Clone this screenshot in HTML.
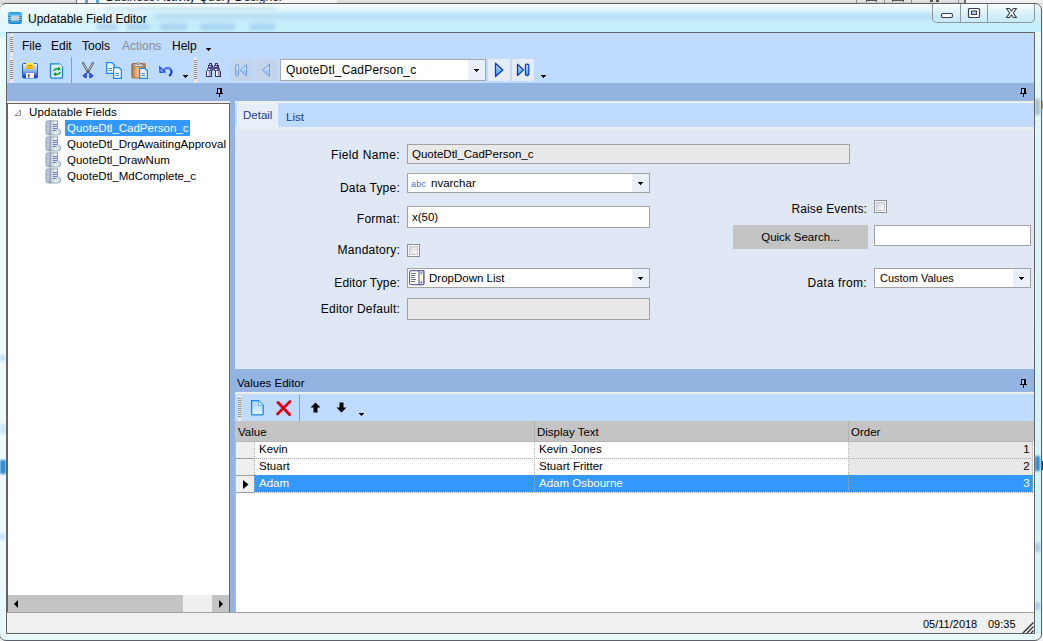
<!DOCTYPE html>
<html><head><meta charset="utf-8">
<style>
*{margin:0;padding:0;box-sizing:border-box}
html,body{width:1043px;height:641px;overflow:hidden;background:#eef0f2}
body{position:relative;font-family:"Liberation Sans",sans-serif;font-size:12px;color:#000}
.a{position:absolute}
.t{position:absolute;white-space:nowrap;line-height:14px;font-size:12px}
.box{position:absolute;border:1px solid #a3a3a3;background:#fff}
.dis{background:#e9e9e9}
.cbtn{position:absolute;top:0;right:0;bottom:0;width:17px;background:#e9f0fa}
.arr{position:absolute;width:5px;height:3px;background:linear-gradient(#000,#000) 0 0/5px 1px no-repeat,linear-gradient(#000,#000) 1px 1px/3px 1px no-repeat,linear-gradient(#000,#000) 2px 2px/1px 1px no-repeat}
.chk{position:absolute;width:13px;height:13px;border:1px solid #8e8e8e;background:#fff}
.chk:after{content:"";position:absolute;left:1px;top:1px;right:1px;bottom:1px;background:linear-gradient(135deg,#c8ccd4,#eeeeee 60%,#f8f8f8);box-shadow:inset 0 0 0 1px #c4c8d0}
.grip{position:absolute;width:3px;background:#eeeae4}
.grip:after{content:"";position:absolute;left:0;right:0;top:3px;bottom:3px;background:repeating-linear-gradient(to bottom,#8c8c8c 0,#8c8c8c 1px,transparent 1px,transparent 2px)}
.pin{width:8px;height:10px}
.sep{position:absolute;width:1px;background:#9c9c9c}
</style></head><body>

<!-- background window strip -->
<div class="a" style="left:0;top:0;width:1043px;height:4px;background:linear-gradient(to bottom,#e8e8e8 0,#e0e0e0 1px,#d6d6d6 2px,#d4d4d4 3px)"></div>
<div class="a" style="left:77px;top:0;width:260px;height:3px;background:#f4f4f4"></div>
<div class="a" style="left:76px;top:0;width:1px;height:3px;background:#6d6d6d"></div>
<div class="a" style="left:85px;top:0;width:3px;height:3px;background:#58a8e0"></div>
<div class="a" style="left:96px;top:0;width:3px;height:3px;background:#58a8e0"></div>
<div class="t" style="left:106px;top:-10px;font-size:12px;color:#101828">Business Activity Query Designer</div>
<div class="a" style="left:856px;top:0;width:1px;height:3px;background:#8a8a8a"></div>
<div class="a" style="left:884px;top:0;width:1px;height:3px;background:#8a8a8a"></div>
<div class="a" style="left:911px;top:0;width:1px;height:3px;background:#8a8a8a"></div>
<div class="a" style="left:958px;top:0;width:1px;height:3px;background:#8a8a8a"></div>
<div class="a" style="left:964px;top:0;width:2px;height:3px;background:#6d6d6d"></div>
<div class="a" style="left:966px;top:0;width:77px;height:3px;background:#f0f0f0"></div>
<div class="a" style="left:866px;top:0;width:11px;height:1px;background:#555"></div>
<div class="a" style="left:866px;top:0;width:1px;height:2px;background:#555"></div>
<div class="a" style="left:876px;top:0;width:1px;height:2px;background:#555"></div>
<div class="a" style="left:892px;top:0;width:12px;height:1px;background:#555"></div>
<div class="a" style="left:892px;top:0;width:1px;height:2px;background:#555"></div>
<div class="a" style="left:903px;top:0;width:1px;height:2px;background:#555"></div>
<div class="a" style="left:930px;top:0;width:3px;height:2px;background:#555"></div>
<div class="a" style="left:936px;top:0;width:3px;height:2px;background:#555"></div>

<!-- window frame -->
<div class="a" style="left:-1px;top:3px;width:1043px;height:638px;border:1px solid #5c6268;border-radius:7px;box-shadow:inset 0 1px 0 #fff;background:linear-gradient(to bottom,#f8feff 0,#e2f6fc 5px,#cdeefa 12px,#c6eefa 20px,#c4f2fc 26px,#c8f4fa 30px,#eefbfc 36px,#eaf9fb 100%)"></div>


<!-- glass blur -->
<div class="a" style="left:0;top:5px;width:160px;height:27px;background:linear-gradient(to right,rgba(255,255,255,.5),rgba(255,255,255,.25) 70%,rgba(255,255,255,0))"></div>
<div class="a" style="left:105px;top:7px;width:172px;height:3px;background:rgba(130,170,220,.22);filter:blur(1.5px)"></div>
<div class="a" style="left:155px;top:14px;width:785px;height:5px;background:rgba(110,165,225,.26);filter:blur(2px)"></div>
<div class="a" style="left:97px;top:24px;width:20px;height:6px;background:rgba(100,140,215,.32);filter:blur(2px)"></div>
<div class="a" style="left:127px;top:24px;width:23px;height:6px;background:rgba(100,140,215,.32);filter:blur(2px)"></div>
<div class="a" style="left:160px;top:24px;width:27px;height:6px;background:rgba(100,140,215,.32);filter:blur(2px)"></div>
<div class="a" style="left:200px;top:24px;width:35px;height:6px;background:rgba(100,140,215,.32);filter:blur(2px)"></div>
<div class="a" style="left:250px;top:24px;width:25px;height:6px;background:rgba(100,140,215,.32);filter:blur(2px)"></div>


<!-- frame blobs -->
<div class="a" style="left:1035px;top:32px;width:6px;height:602px;background:linear-gradient(to bottom,#e6f8fb,#d4f5f9 30%,#d0f4f8)"></div>
<div class="a" style="left:1035px;top:543px;width:5px;height:9px;background:rgba(120,170,230,.5);filter:blur(1.2px)"></div>
<div class="a" style="left:1035px;top:602px;width:5px;height:8px;background:rgba(120,170,230,.5);filter:blur(1.2px)"></div>
<div class="a" style="left:0;top:355px;width:5px;height:6px;background:rgba(120,180,235,.35);filter:blur(1.2px)"></div>
<div class="a" style="left:0;top:534px;width:5px;height:6px;background:rgba(120,180,235,.35);filter:blur(1.2px)"></div>

<div class="a" style="left:0;top:424px;width:6px;height:10px;background:rgba(150,210,245,.45);filter:blur(1.5px)"></div>
<div class="a" style="left:0;top:460px;width:6px;height:14px;background:#2a8ed8;filter:blur(1.2px)"></div>
<div class="a" style="left:1035px;top:99px;width:5px;height:16px;background:rgba(140,165,190,.7);filter:blur(1.5px)"></div>
<div class="a" style="left:1035px;top:456px;width:5px;height:15px;background:#2e8cd2;filter:blur(1.2px)"></div>
<div class="a" style="left:1042px;top:101px;width:1px;height:8px;background:#c89850"></div>
<div class="a" style="left:1042px;top:461px;width:1px;height:9px;background:#1a3a6a"></div>

<!-- title -->
<svg class="a" style="left:7px;top:12px" width="16" height="12" viewBox="0 0 16 12">
<defs><linearGradient id="wi" x1="0" y1="0" x2="0" y2="1"><stop offset="0" stop-color="#1e9be0"/><stop offset=".5" stop-color="#7fd4fa"/><stop offset="1" stop-color="#1482cc"/></linearGradient></defs>
<rect x="1" y="0" width="14" height="12" rx="2.5" fill="url(#wi)"/>
<rect x="4" y="3.5" width="8" height="5" fill="#c9d3dc"/>
<path d="M1 4.5h3M1 6.5h3M1 8.5h3M12 4.5h3M12 6.5h3M12 8.5h3" stroke="#3d6f8e" stroke-width=".8"/>
</svg>
<div class="t" style="left:28px;top:12px;font-size:12px;color:#000">Updatable Field Editor</div>

<!-- caption buttons -->
<div class="a" style="left:932px;top:4px;width:103px;height:19px;border:1px solid #8a96a0;border-top:none;border-radius:0 0 5px 5px;background:linear-gradient(to bottom,rgba(255,255,255,.4),rgba(200,230,245,.4))"></div>
<div class="a" style="left:960px;top:4px;width:1px;height:18px;background:#8a96a0"></div>
<div class="a" style="left:987px;top:4px;width:1px;height:18px;background:#8a96a0"></div>

<!-- client area -->
<div class="a" style="left:6px;top:32px;width:1029px;height:602px;border:1px solid #646464;background:#fff"></div>

<!-- menu bar -->
<div class="a" style="left:7px;top:33px;width:1027px;height:50px;background:#bfdbff"></div>
<div class="grip" style="left:10px;top:34px;height:22px"></div>
<div class="t" style="left:22px;top:39px">File</div>
<div class="t" style="left:51px;top:39px">Edit</div>
<div class="t" style="left:82px;top:39px">Tools</div>
<div class="t" style="left:122px;top:39px;color:#8d8d8d">Actions</div>
<div class="t" style="left:172px;top:39px">Help</div>
<div class="arr" style="left:206px;top:48px"></div>

<!-- toolbar -->
<div class="grip" style="left:10px;top:57px;height:26px"></div>

<!-- dock header -->
<div class="a" style="left:7px;top:83px;width:1027px;height:18px;background:#93b3e1"></div>
<div class="a" style="left:7px;top:101px;width:1027px;height:2px;background:#eeeeee"></div>

<!-- left tree -->
<div class="a" style="left:7px;top:103px;width:223px;height:510px;border:1px solid #646464;background:#fff"></div>
<div class="a" style="left:230px;top:101px;width:5px;height:512px;background:#93b3e1"></div>

<!-- right panel -->
<div class="a" style="left:235px;top:103px;width:799px;height:24px;background:#bfdbff"></div>
<div class="a" style="left:235px;top:127px;width:799px;height:2px;background:#eeeeee"></div>
<div class="a" style="left:235px;top:129px;width:799px;height:240px;background:#dfe8f4"></div>

<!-- values editor -->
<div class="a" style="left:235px;top:369px;width:799px;height:23px;background:#93b3e1"></div>
<div class="a" style="left:235px;top:392px;width:799px;height:2px;background:#eeeeee"></div>
<div class="a" style="left:235px;top:394px;width:799px;height:27px;background:#bfdbff"></div>
<div class="a" style="left:235px;top:421px;width:799px;height:20px;background:#c4c4c4"></div>

<!-- status bar -->
<div class="a" style="left:7px;top:613px;width:1027px;height:20px;background:#f0f0f0"></div>
<div class="a" style="left:7px;top:612px;width:1027px;height:1px;background:#a0a0a0"></div>


<!-- toolbar separators -->
<div class="sep" style="left:71px;top:57px;height:26px"></div>
<div class="grip" style="left:194px;top:57px;height:26px"></div>

<!-- nav buttons -->
<div class="a" style="left:231px;top:59px;width:22px;height:22px;background:#c4d4ea"></div>
<div class="a" style="left:255px;top:59px;width:22px;height:22px;background:#c4d4ea"></div>
<div class="box" style="left:280px;top:59px;width:206px;height:22px;border-color:#a8a8a8"><div class="cbtn"></div></div>
<div class="t" style="left:286px;top:63px;font-size:12px;letter-spacing:.18px">QuoteDtl_CadPerson_c</div>
<div class="arr" style="left:474px;top:69px"></div>
<div class="a" style="left:488px;top:59px;width:22px;height:22px;background:#e6ecf4"></div>
<div class="a" style="left:512px;top:59px;width:22px;height:22px;background:#e6ecf4"></div>
<div class="arr" style="left:541px;top:75px"></div>

<!-- pins -->
<svg class="a" style="left:216px;top:88px" width="7" height="9"><path d="M1 0h5v6h-5z" fill="#000"/><path d="M2 1h2v4h-2z" fill="#a8c8f4"/><path d="M0 5h7v1h-7z" fill="#000"/><path d="M3 6h1v3h-1z" fill="#000"/></svg>
<svg class="a" style="left:1020px;top:88px" width="7" height="9"><path d="M1 0h5v6h-5z" fill="#000"/><path d="M2 1h2v4h-2z" fill="#a8c8f4"/><path d="M0 5h7v1h-7z" fill="#000"/><path d="M3 6h1v3h-1z" fill="#000"/></svg>

<!-- tree content -->
<div class="t" style="left:29px;top:105px;font-size:11.5px;letter-spacing:.1px">Updatable Fields</div>
<div class="a" style="left:65px;top:120px;width:125px;height:16px;background:#3399ff"></div>
<div class="t" style="left:67px;top:121px;font-size:11.5px;color:#fff">QuoteDtl_CadPerson_c</div>
<div class="t" style="left:67px;top:137px;font-size:11.5px">QuoteDtl_DrgAwaitingApproval</div>
<div class="t" style="left:67px;top:153px;font-size:11.5px">QuoteDtl_DrawNum</div>
<div class="t" style="left:67px;top:169px;font-size:11.5px">QuoteDtl_MdComplete_c</div>

<!-- tree scrollbar -->
<div class="a" style="left:8px;top:595px;width:221px;height:17px;background:#c4c4c4"></div>
<div class="a" style="left:183px;top:595px;width:29px;height:17px;background:#efefef"></div>
<div class="a" style="left:14px;top:600px;width:0;height:0;border-top:4px solid transparent;border-bottom:4px solid transparent;border-right:4px solid #000"></div>
<div class="a" style="left:219px;top:600px;width:0;height:0;border-top:4px solid transparent;border-bottom:4px solid transparent;border-left:4px solid #000"></div>

<!-- tabs -->
<div class="a" style="left:237px;top:103px;width:41px;height:24px;background:#e6eef9;border:1px solid #f2f6fc;border-bottom:none;border-radius:3px 3px 0 0"></div>
<div class="t" style="left:243px;top:108px;font-size:11.5px;color:#1e3c8c">Detail</div>
<div class="t" style="left:286px;top:110px;font-size:11.5px;color:#1e3c8c">List</div>

<!-- form labels -->
<div class="t" style="left:200px;width:200px;text-align:right;letter-spacing:0.4px;top:148px">Field Name:</div>
<div class="t" style="left:200px;width:200px;text-align:right;letter-spacing:0.23px;top:181px">Data Type:</div>
<div class="t" style="left:200px;width:200px;text-align:right;letter-spacing:0.26px;top:212px">Format:</div>
<div class="t" style="left:200px;width:200px;text-align:right;letter-spacing:0.24px;top:243px">Mandatory:</div>
<div class="t" style="left:200px;width:200px;text-align:right;letter-spacing:0.16px;top:276px">Editor Type:</div>
<div class="t" style="left:200px;width:200px;text-align:right;letter-spacing:0.21px;top:302px">Editor Default:</div>

<!-- form inputs -->
<div class="box dis" style="left:407px;top:144px;width:443px;height:20px"></div>
<div class="t" style="left:412px;top:147px;font-size:11.5px">QuoteDtl_CadPerson_c</div>
<div class="box" style="left:407px;top:173px;width:243px;height:20px"><div class="cbtn"></div></div>
<div class="t" style="left:411px;top:177px;font-size:9px;color:#3a76c4;letter-spacing:.3px">abc</div>
<div class="t" style="left:431px;top:176px;font-size:11.5px">nvarchar</div>
<div class="arr" style="left:638px;top:182px"></div>
<div class="box" style="left:407px;top:206px;width:243px;height:22px"></div>
<div class="t" style="left:412px;top:210px;font-size:11.5px">x(50)</div>
<div class="chk" style="left:407px;top:244px"></div>
<div class="box" style="left:407px;top:268px;width:243px;height:20px"><div class="cbtn"></div></div>
<div class="t" style="left:429px;top:271px;font-size:11.5px">DropDown List</div>
<div class="arr" style="left:638px;top:277px"></div>
<div class="box dis" style="left:407px;top:298px;width:243px;height:22px"></div>

<div class="t" style="left:700px;width:167px;text-align:right;letter-spacing:0.11px;top:202px">Raise Events:</div>
<div class="chk" style="left:874px;top:200px"></div>
<div class="a" style="left:733px;top:225px;width:135px;height:24px;background:#c4c4c4"></div>
<div class="t" style="left:733px;width:135px;text-align:center;top:230px;font-size:11.5px">Quick Search...</div>
<div class="box" style="left:874px;top:225px;width:157px;height:21px"></div>
<div class="t" style="left:700px;width:167px;text-align:right;letter-spacing:0.34px;top:276px">Data from:</div>
<div class="box" style="left:874px;top:268px;width:157px;height:20px"><div class="cbtn"></div></div>
<div class="t" style="left:880px;top:271px;font-size:11px">Custom Values</div>
<div class="arr" style="left:1019px;top:277px"></div>

<!-- values editor -->
<div class="t" style="left:237px;top:376px;font-size:11.5px">Values Editor</div>
<div class="grip" style="left:238px;top:395px;height:26px"></div>
<div class="sep" style="left:299px;top:395px;height:26px"></div>
<div class="arr" style="left:359px;top:413px"></div>

<svg class="a" style="left:1020px;top:379px" width="7" height="9"><path d="M1 0h5v6h-5z" fill="#000"/><path d="M2 1h2v4h-2z" fill="#a8c8f4"/><path d="M0 5h7v1h-7z" fill="#000"/><path d="M3 6h1v3h-1z" fill="#000"/></svg>
<!-- grid -->
<div class="t" style="left:238px;top:425px;font-size:11.5px">Value</div>
<div class="t" style="left:537px;top:425px;font-size:11.5px">Display Text</div>
<div class="t" style="left:851px;top:425px;font-size:11.5px">Order</div>
<div class="a" style="left:534px;top:421px;width:1px;height:20px;background:#b2b2b2"></div>
<div class="a" style="left:848px;top:421px;width:1px;height:20px;background:#b2b2b2"></div>
<div class="a" style="left:235px;top:441px;width:798px;height:1px;background:#b6b6b6"></div>

<div class="a" style="left:235px;top:442px;width:19px;height:50px;background:#efefef"></div>
<div class="a" style="left:849px;top:442px;width:184px;height:33px;background:#e8e8e8"></div>
<div class="a" style="left:254px;top:475px;width:779px;height:17px;background:#3399ff"></div>
<div class="a" style="left:236px;top:458px;width:18px;height:1px;background:#a0a0a0"></div>
<div class="a" style="left:236px;top:475px;width:18px;height:1px;background:#a0a0a0"></div>
<div class="a" style="left:236px;top:492px;width:18px;height:1px;background:#a0a0a0"></div>
<div class="a" style="left:254px;top:458px;width:779px;height:1px;background:repeating-linear-gradient(to right,#a8a8a8 0,#a8a8a8 1px,transparent 1px,transparent 2px)"></div>
<div class="a" style="left:254px;top:492px;width:779px;height:1px;background:repeating-linear-gradient(to right,#a8a8a8 0,#a8a8a8 1px,transparent 1px,transparent 2px)"></div>
<div class="a" style="left:254px;top:442px;width:1px;height:50px;background:repeating-linear-gradient(to bottom,#a8a8a8 0,#a8a8a8 1px,transparent 1px,transparent 2px)"></div>
<div class="a" style="left:534px;top:442px;width:1px;height:50px;background:repeating-linear-gradient(to bottom,#a8a8a8 0,#a8a8a8 1px,transparent 1px,transparent 2px)"></div>
<div class="a" style="left:848px;top:442px;width:1px;height:50px;background:repeating-linear-gradient(to bottom,#a8a8a8 0,#a8a8a8 1px,transparent 1px,transparent 2px)"></div>
<div class="a" style="left:1032px;top:442px;width:1px;height:50px;background:repeating-linear-gradient(to bottom,#a8a8a8 0,#a8a8a8 1px,transparent 1px,transparent 2px)"></div>
<svg class="a" style="left:243px;top:480px" width="6" height="9"><path d="M0 0 L5.5 4.5 L0 9 Z" fill="#000"/></svg>
<div class="a" style="left:235px;top:442px;width:1px;height:170px;background:#bcbcbc"></div>

<div class="t" style="left:259px;top:442px;font-size:11.5px">Kevin</div>
<div class="t" style="left:539px;top:442px;font-size:11.5px">Kevin Jones</div>
<div class="t" style="left:1001px;width:29px;text-align:right;letter-spacing:.3px;top:442px;font-size:11.5px">1</div>
<div class="t" style="left:259px;top:459px;font-size:11.5px">Stuart</div>
<div class="t" style="left:539px;top:459px;font-size:11.5px">Stuart Fritter</div>
<div class="t" style="left:1001px;width:29px;text-align:right;letter-spacing:.3px;top:459px;font-size:11.5px">2</div>
<div class="t" style="left:259px;top:476px;font-size:11.5px;color:#fff">Adam</div>
<div class="t" style="left:539px;top:476px;font-size:11.5px;color:#fff">Adam Osbourne</div>
<div class="t" style="left:1001px;width:29px;text-align:right;letter-spacing:.3px;top:476px;font-size:11.5px;color:#fff">3</div>


<!-- caption glyphs -->
<svg class="a" style="left:940px;top:12px" width="14" height="7"><rect x="1.5" y="1.5" width="11" height="4" rx="1.5" fill="#fff" stroke="#3b3f52" stroke-width="1.2"/></svg>
<svg class="a" style="left:967px;top:7px" width="14" height="12"><rect x="1.5" y="1.5" width="11" height="9" rx="1" fill="#fff" stroke="#3b3f52" stroke-width="1.2"/><rect x="4.5" y="4" width="5" height="3.5" fill="#a8cce8" stroke="#3b3f52" stroke-width="1"/></svg>
<svg class="a" style="left:1004px;top:7px" width="15" height="12"><path d="M2.5 1.5 L5.5 1.5 L7.5 4 L9.5 1.5 L12.5 1.5 L9.3 6 L12.5 10.5 L9.5 10.5 L7.5 8 L5.5 10.5 L2.5 10.5 L5.7 6 Z" fill="#fff" stroke="#3b3f52" stroke-width="1.2" stroke-linejoin="round"/></svg>

<!-- save -->
<svg class="a" style="left:22px;top:63px" width="16" height="16" viewBox="0 0 16 16">
<defs><linearGradient id="sv" x1="0" y1="0" x2="0" y2="1"><stop offset="0" stop-color="#e8f2ff"/><stop offset=".45" stop-color="#9cc0f0"/><stop offset="1" stop-color="#1028a8"/></linearGradient>
<linearGradient id="sy" x1="0" y1="0" x2="0" y2="1"><stop offset="0" stop-color="#ffe860"/><stop offset="1" stop-color="#f0b000"/></linearGradient></defs>
<rect x=".5" y=".5" width="15" height="14.5" rx="1" fill="url(#sv)" stroke="#1a66e0"/>
<rect x="4" y="0" width="8" height="6" fill="url(#sy)"/>
<path d="M6 2.5h4M6 4.5h1.8" stroke="#c08000" stroke-width=".8"/>
<rect x="4" y="10" width="8" height="5" fill="#f4f4f8"/>
<rect x="6" y="11" width="1.5" height="3.5" fill="#555"/>
</svg>
<!-- refresh -->
<svg class="a" style="left:49px;top:63px" width="16" height="16" viewBox="0 0 16 16">
<path d="M1.5 .8h9l3 3v10.5a.8.8 0 0 1-.8.8H2.3a.8.8 0 0 1-.8-.8z" fill="#d8ecfc" stroke="#1a80f0" stroke-width="1.2"/>
<path d="M10.5 .8v3h3" fill="#fff" stroke="#bcd8f4" stroke-width=".8"/>
<path d="M4 8 C5 5.5 7 4.5 9.5 5.2 L9 3.5 L12 6 L8.8 8 L9.2 6.6 C7.5 6 6 6.8 5.4 8.2 Z" fill="#0a9a1a"/>
<path d="M12 9 C11 11.5 9 12.5 6.5 11.8 L7 13.5 L4 11 L7.2 9 L6.8 10.4 C8.5 11 10 10.2 10.6 8.8 Z" fill="#0a9a1a"/>
</svg>
<!-- cut -->
<svg class="a" style="left:81px;top:62px" width="14" height="17" viewBox="0 0 14 17">
<path d="M2.2 1.2 L6.8 9.8 M11.8 1.2 L7.2 9.8" stroke="#2a2a2a" stroke-width="2" stroke-linecap="round"/>
<path d="M2.4 1.6 L6.8 9.6 M11.6 1.6 L7.2 9.6" stroke="#f8f8f8" stroke-width=".9" stroke-linecap="round"/>
<circle cx="7" cy="9.6" r=".8" fill="#111"/>
<path d="M6.3 10.5 L5 12 M7.7 10.5 L9 12" stroke="#1238d0" stroke-width="1.1"/>
<path d="M5.2 11.6 L2.2 13.8 L5 15.6 Z" fill="none" stroke="#1238d8" stroke-width="1.3" stroke-linejoin="round"/>
<path d="M8.8 11.6 L11.8 13.8 L9 15.6 Z" fill="none" stroke="#1238d8" stroke-width="1.3" stroke-linejoin="round"/>
</svg>
<!-- copy -->
<svg class="a" style="left:105px;top:62px" width="18" height="17" viewBox="0 0 18 17">
<path d="M1.6 .6h5.4l2.4 2.4v8.4H1.6z" fill="#eaf4fe" stroke="#1a88f0" stroke-width="1.2"/>
<path d="M3.5 6.5h3.5M3.5 8.5h3.5" stroke="#3a80d0" stroke-width=".9"/>
<path d="M8.6 5.6h5.4l2.4 2.4v8.4H8.6z" fill="#eaf4fe" stroke="#1a88f0" stroke-width="1.2"/>
<path d="M10.5 11.5h3.5M10.5 13.5h3.5" stroke="#3a80d0" stroke-width=".9"/>
</svg>
<!-- paste -->
<svg class="a" style="left:131px;top:62px" width="18" height="17" viewBox="0 0 18 17">
<defs><linearGradient id="pc" x1="0" y1="0" x2="1" y2="0"><stop offset="0" stop-color="#b86a30"/><stop offset=".4" stop-color="#f0c090"/><stop offset="1" stop-color="#c07840"/></linearGradient></defs>
<rect x=".8" y="1.5" width="13.5" height="14.5" rx=".8" fill="url(#pc)" stroke="#a86028" stroke-width=".8"/>
<rect x="3" y="2" width="9" height="2.4" rx="1" fill="#e8e8e8" stroke="#777" stroke-width=".8"/>
<circle cx="7.5" cy="1.5" r="1.2" fill="#ddd" stroke="#777" stroke-width=".7"/>
<path d="M8.6 6.4h5.2l2.6 2.6v7.4H8.6z" fill="#eaf4fe" stroke="#1a88f0" stroke-width="1.2"/>
<path d="M10.5 11.5h3.5M10.5 13.5h3.5" stroke="#3a80d0" stroke-width=".9"/>
</svg>
<!-- undo -->
<svg class="a" style="left:158px;top:64px" width="16" height="13" viewBox="0 0 16 13">
<path d="M5.5 6.5 C7 3.5 11.5 3 13 6 C14 8 13 10.5 11 12" fill="none" stroke="#1a44d8" stroke-width="2.2"/>
<path d="M5.5 6.5 C7 3.5 11.5 3 13 6" fill="none" stroke="#8cb4f4" stroke-width=".8"/>
<path d="M1 1.5 L1.5 9 L8.5 8.6 Z" fill="#1a44d8"/>
<path d="M2.3 4 L2.6 7.8 L6 7.6 Z" fill="#86aef0"/>
</svg>
<div class="arr" style="left:183px;top:75px"></div>
<!-- binoculars -->
<svg class="a" style="left:206px;top:63px" width="15" height="14" viewBox="0 0 15 14" shape-rendering="crispEdges">
<rect x="3" y="0" width="3" height="3" fill="#3a3a7a"/><rect x="9" y="0" width="3" height="3" fill="#3a3a7a"/>
<rect x="4" y="1" width="1" height="1" fill="#f0f0ff"/><rect x="10" y="1" width="1" height="1" fill="#f0f0ff"/>
<rect x="2" y="2" width="5" height="4" fill="#3c3c7c"/><rect x="8" y="2" width="5" height="4" fill="#3c3c7c"/>
<rect x="3" y="3" width="2" height="1" fill="#d8d8f0"/><rect x="9" y="3" width="2" height="1" fill="#d8d8f0"/>
<rect x="6" y="4" width="3" height="3" fill="#4a4a88"/>
<rect x="1" y="5" width="6" height="3" fill="#5a5a98"/><rect x="8" y="5" width="6" height="3" fill="#5a5a98"/>
<rect x="2" y="6" width="2" height="1" fill="#f4f4ff"/><rect x="9" y="6" width="2" height="1" fill="#f4f4ff"/>
<rect x="0" y="8" width="6" height="6" fill="#34346e"/><rect x="9" y="8" width="6" height="6" fill="#34346e"/>
<rect x="1" y="8" width="4" height="5" fill="#9c9cc8"/><rect x="10" y="8" width="4" height="5" fill="#9c9cc8"/>
<rect x="1" y="8" width="1" height="5" fill="#ffffff"/><rect x="10" y="8" width="1" height="5" fill="#ffffff"/>
<rect x="2" y="8" width="1" height="5" fill="#d8d8ee"/><rect x="11" y="8" width="1" height="5" fill="#d8d8ee"/>
</svg>
<!-- first / prev (disabled) -->
<svg class="a" style="left:234px;top:63px" width="14" height="14" viewBox="0 0 14 14">
<defs><linearGradient id="dg" x1="0" y1="0" x2="0" y2="1"><stop offset="0" stop-color="#c8daf4"/><stop offset=".5" stop-color="#c8daf4"/><stop offset=".5" stop-color="#9ccaf4"/><stop offset="1" stop-color="#a8c4f0"/></linearGradient></defs>
<rect x="1.5" y="1.5" width="3.2" height="11.5" rx="1.4" fill="url(#dg)" stroke="#6e9ee6" stroke-width="1"/>
<path d="M12.5 1.5 L6.2 7.2 L12.5 13 Z" fill="url(#dg)" stroke="#6e9ee6" stroke-width="1" stroke-linejoin="round"/>
</svg>
<svg class="a" style="left:261px;top:63px" width="10" height="15" viewBox="0 0 10 15">
<path d="M8.5 1 L1.5 7.2 L8.5 13.5 Z" fill="url(#dg)" stroke="#6e9ee6" stroke-width="1" stroke-linejoin="round"/>
</svg>
<!-- next / last -->
<svg class="a" style="left:494px;top:62px" width="10" height="16" viewBox="0 0 10 16">
<defs><linearGradient id="ng" x1="0" y1="0" x2="0" y2="1"><stop offset="0" stop-color="#b8d4f8"/><stop offset=".48" stop-color="#8cc0f8"/><stop offset=".5" stop-color="#5cc0f8"/><stop offset=".75" stop-color="#5cb8f8"/><stop offset=".76" stop-color="#5c8ef0"/><stop offset="1" stop-color="#5c8ef0"/></linearGradient></defs>
<path d="M1.5 1.2 L8.8 7.9 L1.5 14.6 Z" fill="url(#ng)" stroke="#0c3cc0" stroke-width="1.3" stroke-linejoin="round"/>
</svg>
<svg class="a" style="left:516px;top:63px" width="14" height="14" viewBox="0 0 14 14">
<path d="M1.5 1.2 L7.5 6.9 L1.5 12.6 Z" fill="url(#ng)" stroke="#0c3cc0" stroke-width="1.3" stroke-linejoin="round"/>
<rect x="9.4" y="1.2" width="3.4" height="11.4" rx="1.5" fill="url(#ng)" stroke="#0c3cc0" stroke-width="1.2"/>
</svg>

<!-- tree expander -->
<svg class="a" style="left:14px;top:109px" width="8" height="8"><path d="M6.5 1 L6.5 6.5 L1 6.5 Z" fill="#fff" stroke="#8a8a8a" stroke-width="1" stroke-linejoin="round"/></svg>

<!-- editor type icon -->
<svg class="a" style="left:409px;top:270px" width="16" height="16" viewBox="0 0 16 16">
<rect x=".6" y=".6" width="14.2" height="14" rx="1.5" fill="#fff" stroke="#6464a8" stroke-width="1.2"/>
<rect x="10" y=".6" width="4.8" height="14" fill="#e4e4ec" stroke="#6464a8" stroke-width="1.2"/>
<rect x="10.8" y="5" width="3.2" height="5" fill="#fff8c0"/>
<circle cx="12.4" cy="2.9" r=".7" fill="#444"/><circle cx="12.4" cy="12.4" r=".7" fill="#444"/>
<path d="M2 3.5h5M2 5.5h4.5M2 7.5h3.5M2 9.5h5M2 11.5h4" stroke="#666" stroke-width=".9"/>
</svg>

<!-- tree item icons -->
<svg class="a" style="left:45px;top:120px" width="17" height="16" viewBox="0 0 17 16">
<defs><linearGradient id="ti120" x1="0" y1="0" x2="1" y2="0"><stop offset="0" stop-color="#b0bfcc"/><stop offset=".5" stop-color="#eef2f6"/><stop offset="1" stop-color="#c4d0dc"/></linearGradient></defs>
<path d="M3 .8 C1.8 .8 1 1.6 1 2.8 V13 C1 14.2 1.8 15 3 15 H5.5 V.8 Z" fill="#b8c6d4" stroke="#8898a8" stroke-width=".8"/>
<path d="M5.2 .8 H12.5 V9 C14.6 9 15.8 10.4 15.8 12 C15.8 13.8 14.6 15 12.8 15 H5.2 Z" fill="url(#ti120)" stroke="#8898a8" stroke-width=".8"/>
<path d="M4 13 C5.6 12.4 5.6 15 4 15" fill="none" stroke="#8898a8" stroke-width=".7"/>
<path d="M8 4.5h4M8 6.5h4M8 8.5h4M8 10.5h3.5" stroke="#4a6cc0" stroke-width=".9"/>
</svg>
<svg class="a" style="left:45px;top:136px" width="17" height="16" viewBox="0 0 17 16">
<defs><linearGradient id="ti136" x1="0" y1="0" x2="1" y2="0"><stop offset="0" stop-color="#b0bfcc"/><stop offset=".5" stop-color="#eef2f6"/><stop offset="1" stop-color="#c4d0dc"/></linearGradient></defs>
<path d="M3 .8 C1.8 .8 1 1.6 1 2.8 V13 C1 14.2 1.8 15 3 15 H5.5 V.8 Z" fill="#b8c6d4" stroke="#8898a8" stroke-width=".8"/>
<path d="M5.2 .8 H12.5 V9 C14.6 9 15.8 10.4 15.8 12 C15.8 13.8 14.6 15 12.8 15 H5.2 Z" fill="url(#ti136)" stroke="#8898a8" stroke-width=".8"/>
<path d="M4 13 C5.6 12.4 5.6 15 4 15" fill="none" stroke="#8898a8" stroke-width=".7"/>
<path d="M8 4.5h4M8 6.5h4M8 8.5h4M8 10.5h3.5" stroke="#4a6cc0" stroke-width=".9"/>
</svg>
<svg class="a" style="left:45px;top:152px" width="17" height="16" viewBox="0 0 17 16">
<defs><linearGradient id="ti152" x1="0" y1="0" x2="1" y2="0"><stop offset="0" stop-color="#b0bfcc"/><stop offset=".5" stop-color="#eef2f6"/><stop offset="1" stop-color="#c4d0dc"/></linearGradient></defs>
<path d="M3 .8 C1.8 .8 1 1.6 1 2.8 V13 C1 14.2 1.8 15 3 15 H5.5 V.8 Z" fill="#b8c6d4" stroke="#8898a8" stroke-width=".8"/>
<path d="M5.2 .8 H12.5 V9 C14.6 9 15.8 10.4 15.8 12 C15.8 13.8 14.6 15 12.8 15 H5.2 Z" fill="url(#ti152)" stroke="#8898a8" stroke-width=".8"/>
<path d="M4 13 C5.6 12.4 5.6 15 4 15" fill="none" stroke="#8898a8" stroke-width=".7"/>
<path d="M8 4.5h4M8 6.5h4M8 8.5h4M8 10.5h3.5" stroke="#4a6cc0" stroke-width=".9"/>
</svg>
<svg class="a" style="left:45px;top:168px" width="17" height="16" viewBox="0 0 17 16">
<defs><linearGradient id="ti168" x1="0" y1="0" x2="1" y2="0"><stop offset="0" stop-color="#b0bfcc"/><stop offset=".5" stop-color="#eef2f6"/><stop offset="1" stop-color="#c4d0dc"/></linearGradient></defs>
<path d="M3 .8 C1.8 .8 1 1.6 1 2.8 V13 C1 14.2 1.8 15 3 15 H5.5 V.8 Z" fill="#b8c6d4" stroke="#8898a8" stroke-width=".8"/>
<path d="M5.2 .8 H12.5 V9 C14.6 9 15.8 10.4 15.8 12 C15.8 13.8 14.6 15 12.8 15 H5.2 Z" fill="url(#ti168)" stroke="#8898a8" stroke-width=".8"/>
<path d="M4 13 C5.6 12.4 5.6 15 4 15" fill="none" stroke="#8898a8" stroke-width=".7"/>
<path d="M8 4.5h4M8 6.5h4M8 8.5h4M8 10.5h3.5" stroke="#4a6cc0" stroke-width=".9"/>
</svg>

<!-- values editor icons -->
<svg class="a" style="left:250px;top:399px" width="15" height="17" viewBox="0 0 15 17">
<defs><linearGradient id="nd" x1="0" y1="0" x2="0" y2="1"><stop offset="0" stop-color="#a8d8f8"/><stop offset="1" stop-color="#e4f4fe"/></linearGradient></defs>
<path d="M1.6 1.6 L8.5 1.6 L13.2 6.3 L13.2 15 a.8.8 0 0 1 -.8.8 L2.4 15.8 a.8.8 0 0 1 -.8 -.8 Z" fill="url(#nd)" stroke="#1a88f0" stroke-width="1.3"/>
<path d="M8.5 1.6 L8.5 6.3 L13.2 6.3 Z" fill="#fff" stroke="#1a88f0" stroke-width=".6"/>
</svg>
<svg class="a" style="left:275px;top:400px" width="17" height="17" viewBox="0 0 17 17">
<path d="M3 2.5 L14.5 14.5" stroke="#e00012" stroke-width="3" stroke-linecap="round"/>
<path d="M15 1.5 L2.5 14" stroke="#e00012" stroke-width="2.6" stroke-linecap="round"/>
</svg>
<svg class="a" style="left:310px;top:402px" width="11" height="11" viewBox="0 0 11 11"><path d="M5.5 .5 L10.5 5.5 L7.5 5.5 L7.5 10.5 L3.5 10.5 L3.5 5.5 L.5 5.5 Z" fill="#000"/></svg>
<svg class="a" style="left:336px;top:402px" width="11" height="11" viewBox="0 0 11 11"><path d="M3.5 .5 L7.5 .5 L7.5 5.5 L10.5 5.5 L5.5 10.5 L.5 5.5 L3.5 5.5 Z" fill="#000"/></svg>

<!-- size grip -->
<svg class="a" style="left:1020px;top:622px" width="14" height="11" viewBox="0 0 14 11">
<path d="M13.5 .5 L3 11 M13.5 4.5 L7 11 M13.5 8.5 L11 11" stroke="#3a3a3a" stroke-width="1.5"/>
<path d="M14 2.2 L5.2 11 M14 6.2 L9.2 11" stroke="#fff" stroke-width="1"/>
</svg>

<!-- status bar -->
<div class="t" style="left:923px;top:617px;font-size:11px">05/11/2018</div>
<div class="t" style="left:988px;top:617px;font-size:11px">09:35</div>

</body></html>
